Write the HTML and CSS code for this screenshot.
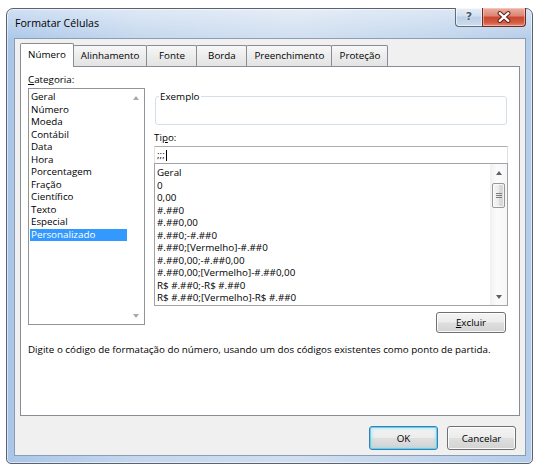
FILE: index.html
```html
<!DOCTYPE html>
<html lang="pt-BR">
<head>
<meta charset="utf-8">
<title>Formatar Células</title>
<link rel="stylesheet" href="styles.css">
</head>
<body>
<div class="window">
  <div class="titlebar">
    <span class="title">Formatar Células</span>
    <div class="caption">
      <div class="cap-btn cap-help"><span class="help-glyph">?</span></div>
      <div class="cap-btn cap-close">
        <svg class="close-x" width="44" height="18" viewBox="0 0 44 18">
          <path d="M17.5 5 L26.5 13 M26.5 5 L17.5 13" stroke="#5e1f17" stroke-width="4.4" stroke-linecap="round" fill="none"/>
          <path d="M17.5 5 L26.5 13 M26.5 5 L17.5 13" stroke="#ffffff" stroke-width="2.4" stroke-linecap="round" fill="none"/>
        </svg>
      </div>
    </div>
  </div>
  <div class="client">
    <div class="tabs">
      <div class="tab tab-active">Número</div>
      <div class="tab">Alinhamento</div>
      <div class="tab">Fonte</div>
      <div class="tab">Borda</div>
      <div class="tab">Preenchimento</div>
      <div class="tab">Proteção</div>
    </div>
    <div class="panel">
      <div class="panel-grid">
        <div class="col-left">
          <div class="label"><u>C</u>ategoria:</div>
          <div class="listbox cat-list">
            <div class="items">
              <div class="item">Geral</div>
              <div class="item">Número</div>
              <div class="item">Moeda</div>
              <div class="item">Contábil</div>
              <div class="item">Data</div>
              <div class="item">Hora</div>
              <div class="item">Porcentagem</div>
              <div class="item">Fração</div>
              <div class="item">Científico</div>
              <div class="item">Texto</div>
              <div class="item">Especial</div>
              <div class="item selected">Personalizado</div>
            </div>
            <div class="vscroll disabled">
              <div class="arrow arrow-up"></div>
              <div class="track"></div>
              <div class="arrow arrow-down"></div>
            </div>
          </div>
        </div>
        <div class="col-right">
          <div class="group"><span class="legend">Exemplo</span></div>
          <div class="label label-tipo">Ti<u>p</u>o:</div>
          <div class="textbox">;;;<span class="caret"></span></div>
          <div class="listbox fmt-list">
            <div class="items">
              <div class="item">Geral</div>
              <div class="item">0</div>
              <div class="item">0,00</div>
              <div class="item">#.##0</div>
              <div class="item">#.##0,00</div>
              <div class="item">#.##0;-#.##0</div>
              <div class="item">#.##0;[Vermelho]-#.##0</div>
              <div class="item">#.##0,00;-#.##0,00</div>
              <div class="item">#.##0,00;[Vermelho]-#.##0,00</div>
              <div class="item">R$ #.##0;-R$ #.##0</div>
              <div class="item">R$ #.##0;[Vermelho]-R$ #.##0</div>
            </div>
            <div class="vscroll">
              <div class="arrow arrow-up"></div>
              <div class="track"><div class="thumb"><span class="grip"></span></div></div>
              <div class="arrow arrow-down"></div>
            </div>
          </div>
          <div class="btn-row"><div class="btn btn-excluir"><u>E</u>xcluir</div></div>
        </div>
      </div>
      <p class="desc">Digite o código de formatação do número, usando um dos códigos existentes como ponto de partida.</p>
    </div>
    <div class="footer">
      <div class="btn btn-default">OK</div>
      <div class="btn">Cancelar</div>
    </div>
  </div>
</div>
</body>
</html>
```

FILE: styles.css
```css
body {
  margin: 0;
  background: #ffffff;
  font-family: "Open Sans", "Noto Sans", sans-serif;
  font-size: 9.8px;
  color: #000000;
}

.window {
  width: 527px;
  height: 456px;
  margin: 8px 0 0 6px;
  box-sizing: border-box;
  border: 1px solid #59626e;
  border-radius: 7px 7px 5px 5px;
  padding: 0 6px 7px 7px;
  display: flex;
  flex-direction: column;
  background:
    linear-gradient(180deg, rgba(255,255,255,0.45), rgba(255,255,255,0) 32px),
    linear-gradient(90deg, #a9c6e9 0%, #c4d7ee 25%, #d0def0 55%, #c2d6ed 80%, #b3cce9 100%);
  box-shadow: inset 0 0 0 1px rgba(255,255,255,0.55);
}

.titlebar {
  height: 29px;
  flex: none;
  display: flex;
  align-items: flex-start;
}

.title {
  font-size: 10.6px;
  line-height: 14px;
  margin: 7px 0 0 1px;
  color: #000000;
}

.caption {
  margin-left: auto;
  margin-top: -1px;
  display: flex;
}

.cap-btn {
  height: 19px;
  box-sizing: border-box;
  border: 1px solid #5f6b7b;
  border-top: none;
  display: flex;
  align-items: center;
  justify-content: center;
}

.cap-help {
  width: 27px;
  border-right: none;
  border-radius: 0 0 0 4px;
  background: linear-gradient(180deg, #e6eef8 0%, #d2dfee 45%, #bccfe6 50%, #cddcee 100%);
  box-shadow: inset 0 0 0 1px rgba(255,255,255,0.6);
}

.help-glyph {
  font-family: "DejaVu Sans", sans-serif;
  font-size: 11px;
  font-weight: bold;
  line-height: 12px;
  color: #4d5a6c;
  text-shadow: 0 0 2px #ffffff;
}

.cap-close {
  width: 44px;
  border-radius: 0 0 4px 0;
  border-color: #6b2a22;
  background: linear-gradient(180deg, #eab0a3 0%, #dc8472 45%, #c9472f 50%, #d35a41 80%, #e38d75 100%);
  box-shadow: inset 0 0 0 1px rgba(255,220,210,0.5);
}

.close-x {
  display: block;
}

.client {
  flex: 1;
  background: #f0f0f0;
  border: 1px solid #8c9cb1;
  display: flex;
  flex-direction: column;
  padding: 4px 5px 0 5px;
}

.tabs {
  display: flex;
  align-items: flex-end;
  height: 23px;
  flex: none;
}

.tab {
  height: 21px;
  min-width: 51px;
  box-sizing: border-box;
  border: 1px solid #898c95;
  border-bottom: none;
  border-radius: 2px 2px 0 0;
  margin-right: -1px;
  padding: 0 7px;
  line-height: 19px;
  text-align: center;
  background: linear-gradient(180deg, #f7f7f7 0%, #ececec 50%, #e3e3e3 100%);
}

.tab-active {
  height: 24px;
  margin-bottom: -1px;
  line-height: 21px;
  background: #ffffff;
  position: relative;
  z-index: 1;
}

.panel {
  flex: none;
  height: 350px;
  box-sizing: border-box;
  border: 1px solid #898c95;
  background: #ffffff;
  padding: 6px 11px 0 7px;
}

.panel-grid {
  display: grid;
  grid-template-columns: 117px 354px;
  column-gap: 9px;
  align-items: start;
}

.label {
  line-height: 13px;
  height: 13px;
}

.listbox {
  display: flex;
  box-sizing: border-box;
  border: 1px solid #8f939a;
  background: #ffffff;
}

.cat-list {
  margin-top: 2px;
  height: 237px;
}

.items {
  flex: 1;
  padding: 2px 0 0 1px;
  overflow: hidden;
}

.item {
  height: 12.5px;
  line-height: 12.5px;
  padding-left: 1px;
  white-space: nowrap;
}

.selected {
  background: #3399ff;
  color: #ffffff;
}

.vscroll {
  width: 17px;
  flex: none;
  display: flex;
  flex-direction: column;
}

.arrow {
  height: 17px;
  flex: none;
  display: flex;
  align-items: center;
  justify-content: center;
}

.arrow::before {
  content: "";
  border-left: 3.5px solid transparent;
  border-right: 3.5px solid transparent;
}

.arrow-up::before {
  border-bottom: 4px solid #5f5f5f;
}

.arrow-down::before {
  border-top: 4px solid #5f5f5f;
}

.disabled .arrow-up::before {
  border-bottom-color: #a8a8a8;
}

.disabled .arrow-down::before {
  border-top-color: #a8a8a8;
}

.track {
  flex: 1;
}

.fmt-list .vscroll {
  background: linear-gradient(90deg, #f0f0f0, #fbfbfb 40%, #f6f6f6);
}

.thumb {
  margin: 2px 2px 0;
  height: 25px;
  box-sizing: border-box;
  border: 1px solid #989898;
  border-radius: 2px;
  background: linear-gradient(90deg, #f6f6f6 0%, #ececec 50%, #dcdcdc 51%, #d6d6d6 100%);
  box-shadow: inset 0 0 0 1px rgba(255,255,255,0.7);
  display: flex;
  align-items: center;
  justify-content: center;
}

.grip {
  width: 6px;
  height: 5px;
  background: repeating-linear-gradient(180deg, #7c7c7c 0, #7c7c7c 1px, transparent 1px, transparent 2px);
}

.group {
  margin: 23px 1px 0 1px;
  height: 29px;
  box-sizing: border-box;
  border: 1px solid #d5dfe5;
  border-radius: 3px;
  box-shadow: inset 0 0 0 1px #ffffff;
}

.legend {
  display: inline-block;
  vertical-align: top;
  margin: -7px 0 0 3px;
  padding: 0 1px;
  line-height: 13px;
  background: #ffffff;
}

.label-tipo {
  margin-top: 6px;
}

.textbox {
  margin-top: 2px;
  height: 17px;
  box-sizing: border-box;
  border: 1px solid #abadb3;
  border-color: #abadb3 #dbdfe6 transparent #e2e3ea;
  border-bottom: none;
  padding-left: 2px;
  display: flex;
  align-items: center;
  line-height: 14px;
}

.caret {
  display: inline-block;
  width: 1px;
  height: 11px;
  margin-left: 1px;
  background: #000000;
}

.fmt-list {
  height: 143px;
  border-color: #a0a3a8;
}

.fmt-list .items {
  padding-top: 3px;
  padding-left: 1px;
}

.btn-row {
  display: flex;
  justify-content: flex-end;
  margin-top: 6px;
  padding-right: 2px;
}

.btn {
  width: 69px;
  height: 24px;
  box-sizing: border-box;
  border: 1px solid #707070;
  border-radius: 3px;
  background: linear-gradient(180deg, #f4f4f4 0%, #ececec 48%, #dfdfdf 52%, #d3d3d3 100%);
  box-shadow: inset 0 0 0 1px rgba(255,255,255,0.85);
  display: flex;
  align-items: center;
  justify-content: center;
  line-height: 13px;
}

.btn-excluir {
  width: 70px;
  height: 21px;
}

.btn-default {
  border-color: #3c7fb1;
  box-shadow: inset 0 0 0 1px #62d0ef, inset 0 0 3px 2px rgba(130,220,248,0.45);
}

.desc {
  margin: 10px 0 0 0;
  line-height: 13px;
}

.footer {
  display: flex;
  justify-content: flex-end;
  gap: 9px;
  margin-top: 10px;
  padding-right: 4px;
}
```
